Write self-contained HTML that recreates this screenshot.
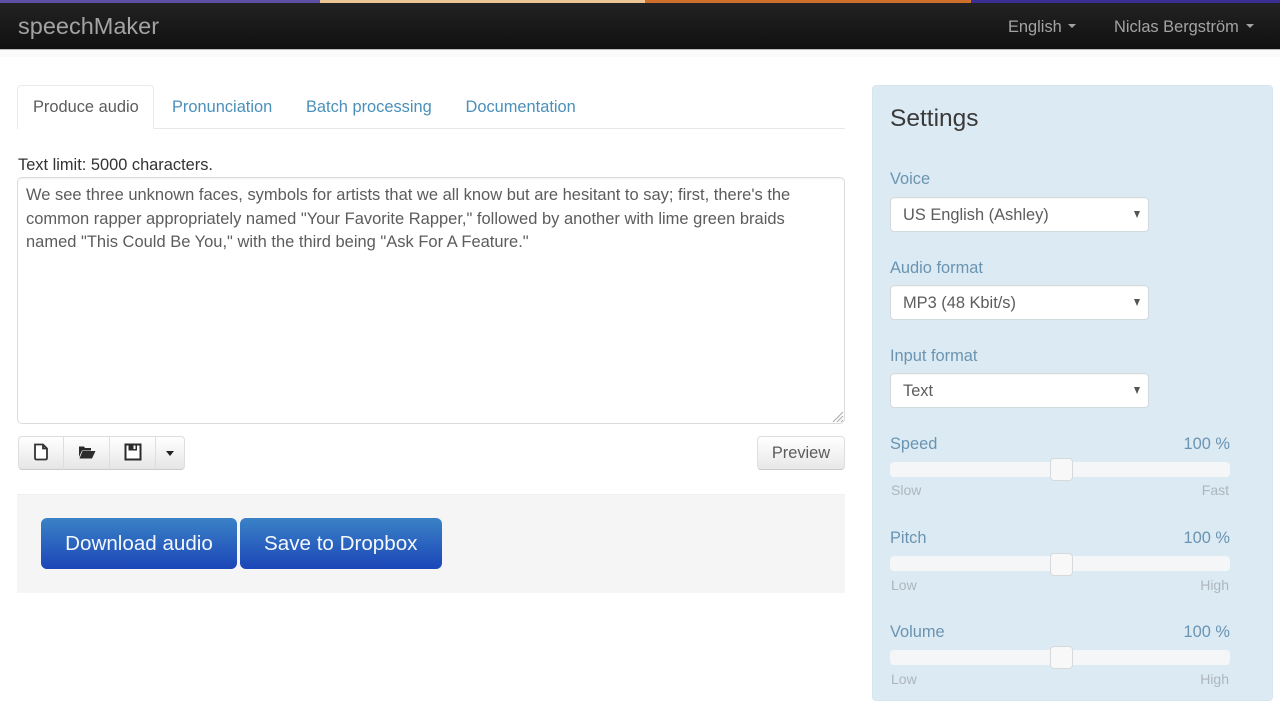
<!DOCTYPE html>
<html><head><meta charset="utf-8"><style>
html,body{margin:0;padding:0;background:#fff}
body{width:1280px;height:718px;overflow:hidden;position:relative;font-family:"Liberation Sans",sans-serif;font-size:16.4px;color:#333}
.a{position:absolute}
.t{position:absolute;white-space:nowrap;line-height:20px}
.lbl{color:#6a94b1}
.sm{color:#adb6bc;font-size:14px}
.link{color:#4a90bb}
.nav{color:#a3a3a3}
.sel{position:absolute;left:890px;width:257px;height:33px;background:#fff;border:1px solid #d3dade;border-radius:4px;box-shadow:inset 0 1px 1px rgba(0,0,0,.04)}
.sel span{position:absolute;left:12px;top:7px;line-height:20px;color:#5c5c5c;white-space:nowrap}
.sel i{position:absolute;left:243px;top:13px;width:0;height:0;border-left:3.500px solid transparent;border-right:3.500px solid transparent;border-top:7px solid #555}
.track{position:absolute;left:890px;width:340px;height:15px;background:#f4f6f7;border-radius:4px}
.knob{position:absolute;left:1050px;width:23px;height:23px;box-sizing:border-box;background:#f8f8f8;border:1px solid #d7dadc;border-radius:4px}
.caret{position:absolute;width:0;height:0;border-left:4.500px solid transparent;border-right:4.500px solid transparent;border-top:4.500px solid #a3a3a3}
.tb{position:absolute;top:436px;height:34px;box-sizing:border-box;background:linear-gradient(#fff,#e6e6e6);border:1px solid #dedede;border-bottom-color:#cbcbcb}
.blue{position:absolute;top:518px;height:51px;box-sizing:border-box;background:linear-gradient(#3a82c6,#1b46b8);border-radius:6px;color:#f4f8fc;font-size:20.600px;line-height:52px;text-align:center;white-space:nowrap}
</style></head><body>
<div class="a" style="left:0;top:0;width:1280px;height:49px;background:linear-gradient(#242424,#101010)"></div>
<div class="a" style="left:0;top:49px;width:1280px;height:1px;background:#bbb"></div>
<div class="a" style="left:0;top:50px;width:1280px;height:7px;background:#fafafa"></div>
<div class="a" style="left:0;top:0;width:320px;height:3px;background:#5d4fa3"></div>
<div class="a" style="left:320px;top:0;width:325px;height:3px;background:#eec596"></div>
<div class="a" style="left:645px;top:0;width:326px;height:3px;background:#cf6f2c"></div>
<div class="a" style="left:971px;top:0;width:309px;height:3px;background:#3b2f94"></div>
<div class="t nav" style="left:18px;top:16px;font-size:23.500px">speechMaker</div>
<div class="t nav" style="left:1008px;top:16.500px">English</div>
<div class="caret" style="left:1068px;top:24px"></div>
<div class="t nav" style="left:1114px;top:16.500px">Niclas Bergström</div>
<div class="caret" style="left:1246px;top:24px"></div>

<div class="a" style="left:17px;top:128px;width:828px;height:1px;background:#e8e8e8"></div>
<div class="a" style="left:17px;top:85px;width:137px;height:44px;box-sizing:border-box;background:#fff;border:1px solid #ebebeb;border-bottom:0;border-radius:4px 4px 0 0"></div>
<div class="t" style="left:33px;top:97px;color:#5c5c5c">Produce audio</div>
<div class="t link" style="left:172px;top:97px">Pronunciation</div>
<div class="t link" style="left:306px;top:97px">Batch processing</div>
<div class="t link" style="left:465.500px;top:97px">Documentation</div>

<div class="t" style="left:18px;top:155px">Text limit: 5000 characters.</div>
<div class="a" style="left:17px;top:177px;width:828px;height:247px;box-sizing:border-box;background:#fff;border:1px solid #dcdcdc;border-radius:5px;box-shadow:inset 0 1px 1px rgba(0,0,0,.05)"></div>
<div class="t" style="left:26px;top:184px;color:#5c5c5c;line-height:23.500px;font-size:16.490px">We see three unknown faces, symbols for artists that we all know but are hesitant to say; first, there's the<br>common rapper appropriately named "Your Favorite Rapper," followed by another with lime green braids<br>named "This Could Be You," with the third being "Ask For A Feature."</div>
<svg class="a" style="left:832px;top:411px" width="12" height="12" viewBox="0 0 12 12"><path d="M1 11L11 1M5 11L11 5M9 11L11 9" stroke="#aaa" stroke-width="1" fill="none"/></svg>

<div class="tb" style="left:18px;width:46px;border-radius:4px 0 0 4px"></div>
<div class="tb" style="left:64px;width:46px;border-left:0"></div>
<div class="tb" style="left:110px;width:46px;border-left:0"></div>
<div class="tb" style="left:156px;width:29px;border-left:0;border-radius:0 4px 4px 0"></div>
<svg class="a" style="left:33px;top:443px" width="16" height="18" viewBox="0 0 16 18"><path d="M2 1.500H10L14 5.500V15Q14 16.500 12.500 16.500H3.500Q2 16.500 2 15ZM10 1.500V5.500H14" fill="#fff" stroke="#333" stroke-width="1.800"/></svg>
<svg class="a" style="left:78px;top:445px" width="18" height="14" viewBox="0 0 18 14"><path d="M1 1.500H6L7 3H13V5.500H4L1 12ZM4.500 6H17.500L14 13.500H1.500Z" fill="#2b2b2b"/></svg>
<svg class="a" style="left:124px;top:443px" width="18" height="18" viewBox="0 0 18 18"><path d="M1.500 1.500H16.500V16.500H1.500Z" fill="#fff" stroke="#2b2b2b" stroke-width="2"/><path d="M4.500 1.500H13V7.500H4.500Z" fill="#2b2b2b"/><path d="M9.500 2.500H11.500V6H9.500Z" fill="#fff"/></svg>
<div class="a" style="left:166px;top:451px;width:0;height:0;border-left:4.500px solid transparent;border-right:4.500px solid transparent;border-top:5px solid #222"></div>

<div class="a" style="left:757px;top:436px;width:88px;height:34px;box-sizing:border-box;background:linear-gradient(#fff,#e8e8e8);border:1px solid #dedede;border-bottom-color:#cbcbcb;border-radius:4px;text-align:center;line-height:32px;color:#5c5c5c">Preview</div>

<div class="a" style="left:17px;top:494px;width:828px;height:99px;background:#f5f5f5;border-top:1px solid #f0f0f0;box-sizing:border-box"></div>
<div class="blue" style="left:41px;width:196px">Download audio</div>
<div class="blue" style="left:240px;width:201.500px">Save to Dropbox</div>

<div class="a" style="left:872px;top:85px;width:401px;height:616px;box-sizing:border-box;background:#dceaf4;border:1px solid #d6e6f1;border-radius:4px"></div>
<div class="t" style="left:890px;top:108px;font-size:24.500px;line-height:21px;color:#3a3a3a">Settings</div>

<div class="t lbl" style="left:890px;top:169px">Voice</div>
<div class="sel" style="top:197px"><span>US English (Ashley)</span><i></i></div>
<div class="t lbl" style="left:890px;top:257.500px">Audio format</div>
<div class="sel" style="top:285px"><span>MP3 (48 Kbit/s)</span><i></i></div>
<div class="t lbl" style="left:890px;top:345.500px">Input format</div>
<div class="sel" style="top:373px"><span>Text</span><i></i></div>

<div class="t lbl" style="left:890px;top:434px">Speed</div>
<div class="t lbl" style="right:50px;top:434px">100 %</div>
<div class="track" style="top:462px"></div><div class="knob" style="top:458px"></div>
<div class="t sm" style="left:891px;top:480px">Slow</div><div class="t sm" style="right:51px;top:480px">Fast</div>

<div class="t lbl" style="left:890px;top:528px">Pitch</div>
<div class="t lbl" style="right:50px;top:528px">100 %</div>
<div class="track" style="top:556px"></div><div class="knob" style="top:552.500px"></div>
<div class="t sm" style="left:891px;top:574.500px">Low</div><div class="t sm" style="right:51px;top:574.500px">High</div>

<div class="t lbl" style="left:890px;top:622px">Volume</div>
<div class="t lbl" style="right:50px;top:622px">100 %</div>
<div class="track" style="top:650px"></div><div class="knob" style="top:646px"></div>
<div class="t sm" style="left:891px;top:668.500px">Low</div><div class="t sm" style="right:51px;top:668.500px">High</div>
</body></html>
